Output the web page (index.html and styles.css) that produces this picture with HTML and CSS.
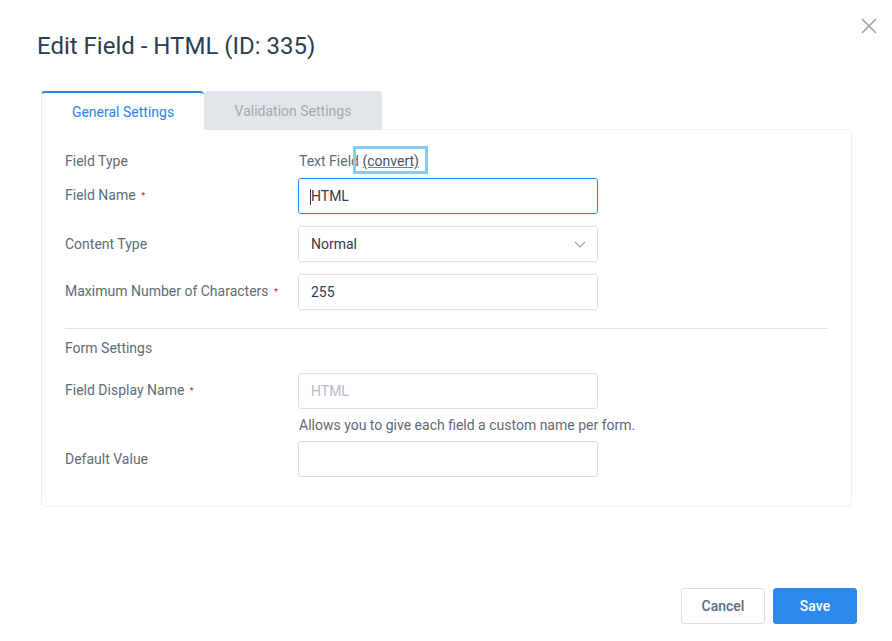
FILE: index.html
```html
<!DOCTYPE html>
<html lang="en">
<head>
    <meta charset="UTF-8">
    <meta name="viewport" content="width=device-width, initial-scale=1.0">
    <title>Edit Field</title>
    <link rel="stylesheet" href="styles.css">
</head>
<body>

    <div class="modal">
        <button class="cerrar" aria-label="Close">
            <svg width="18" height="18" viewBox="0 0 18 18">
                <path d="M2 2 L16 16 M16 2 L2 16" stroke="#9aa2ab" stroke-width="1.6" fill="none"/>
            </svg>
        </button>

        <h1 class="titulo">Edit Field - HTML (ID: 335)</h1>

        <!-- Pestañas -->
        <div class="tabs">
            <div class="tab activa">General Settings</div>
            <div class="tab">Validation Settings</div>
        </div>

        <div class="panel">
            <div class="fila fila-texto">
                <label>Field Type</label>
                <div class="valor">Text Field <a href="#" class="convertir">(convert)</a></div>
            </div>

            <div class="fila">
                <label>Field Name <span class="req">*</span></label>
                <div class="control">
                    <input type="text" class="campo foco" value="HTML">
                    <span class="caret"></span>
                </div>
            </div>

            <div class="fila">
                <label>Content Type</label>
                <div class="control">
                    <select class="campo">
                        <option>Normal</option>
                    </select>
                    <svg class="chevron" width="12" height="7" viewBox="0 0 12 7">
                        <path d="M1 1 L6 6 L11 1" stroke="#9aa2ab" stroke-width="1.2" fill="none"/>
                    </svg>
                </div>
            </div>

            <div class="fila">
                <label>Maximum Number of Characters <span class="req">*</span></label>
                <div class="control">
                    <input type="text" class="campo" value="255">
                </div>
            </div>

            <hr class="separador">

            <div class="fila fila-seccion">
                <label>Form Settings</label>
            </div>

            <div class="fila">
                <label>Field Display Name <span class="req">*</span></label>
                <div class="control">
                    <input type="text" class="campo" placeholder="HTML">
                </div>
            </div>

            <div class="fila fila-ayuda">
                <span></span>
                <div class="ayuda">Allows you to give each field a custom name per form.</div>
            </div>

            <div class="fila">
                <label>Default Value</label>
                <div class="control">
                    <input type="text" class="campo">
                </div>
            </div>
        </div>

        <div class="pie">
            <button class="boton">Cancel</button>
            <button class="boton primario">Save</button>
        </div>
    </div>

</body>
</html>
```

FILE: styles.css
```css
/* Estilos básicos */
body {
    font-family: Roboto, "Liberation Sans", Arial, sans-serif;
    margin: 0;
    padding: 0;
    background-color: white;
    color: #5f6b77;
    font-size: 14px;
}

.modal {
    position: relative;
    width: 892px;
    height: 641px;
    box-sizing: border-box;
    padding: 30px 35px 0 41px;
}

.cerrar {
    position: absolute;
    top: 17px;
    right: 14px;
    background: none;
    border: 0;
    padding: 0;
    cursor: pointer;
}

.titulo {
    margin: 0 0 29px -4px;
    font-size: 24px;
    font-weight: 400;
    line-height: 32px;
    color: #2c3e50;
}

/* Pestañas */
.tabs {
    display: flex;
    position: relative;
    z-index: 1;
}

.tab {
    height: 39px;
    box-sizing: border-box;
    padding: 0 30px;
    display: flex;
    align-items: center;
    justify-content: center;
    white-space: nowrap;
    background-color: #e2e6e9;
    color: #a2aab2;
    border-radius: 4px 4px 0 0;
    cursor: pointer;
}

.tab.activa {
    width: 163px;
    background-color: white;
    color: #2b86e6;
    border-top: 2px solid #2b86e6;
    border-left: 1px solid #eceef0;
    padding-top: 1px;
}

.tab:not(.activa) {
    width: 178px;
}

.panel {
    width: 811px;
    box-sizing: border-box;
    border: 1px solid #eceef0;
    border-radius: 0 6px 6px 6px;
    padding: 21px 23px 29px 23px;
    margin-top: -1px;
}

/* Filas del formulario */
.fila {
    display: grid;
    grid-template-columns: 233px 300px;
    align-items: center;
    margin-bottom: 12px;
}

.fila:last-child {
    margin-bottom: 0;
}

.fila label {
    line-height: 20px;
}

.fila-texto {
    height: 20px;
    margin-bottom: 7px;
}

.fila-seccion {
    height: 20px;
    margin-bottom: 15px;
}

.fila-ayuda {
    height: 20px;
    margin-top: -6px;
    margin-bottom: 6px;
}

.valor {
    padding-left: 1px;
    line-height: 20px;
    color: #5f6b77;
}

.convertir {
    color: #4a5662;
    text-decoration: underline;
    text-decoration-color: #7a8590;
    display: inline-block;
    line-height: 18px;
    padding: 4px 7px 2px 7px;
    margin: -4px -7px -2px -7px;
    outline: 3px solid #85cdf7;
    outline-offset: -1px;
}

.req {
    color: #b3261e;
    font-size: 9px;
    position: relative;
    top: -1px;
    margin-left: 2px;
}

.control {
    position: relative;
}

.campo {
    display: block;
    width: 300px;
    height: 36px;
    box-sizing: border-box;
    border: 1px solid #dcdfe3;
    border-radius: 3px;
    padding: 0 12px;
    font-family: inherit;
    font-size: 14px;
    color: #2c3e50;
    background-color: white;
    outline: none;
}

.campo::placeholder {
    color: #b5bcc4;
}

.campo.foco {
    border-color: #2b86e6;
}

.caret {
    position: absolute;
    left: 12px;
    top: 11px;
    width: 1px;
    height: 16px;
    background-color: #2c3e50;
}

select.campo {
    appearance: none;
    -webkit-appearance: none;
}

.chevron {
    position: absolute;
    right: 12px;
    top: 15px;
    pointer-events: none;
}

.separador {
    border: 0;
    border-top: 1px solid #e0e3e6;
    margin: 18px 0 9px 0;
}

.ayuda {
    padding-left: 1px;
    white-space: nowrap;
}

/* Botones */
.pie {
    display: flex;
    justify-content: flex-end;
    gap: 8px;
    margin-top: 81px;
}

.boton {
    width: 84px;
    height: 36px;
    border: 1px solid #dcdfe3;
    border-radius: 3px;
    background-color: white;
    color: #5f6b77;
    font-family: inherit;
    font-size: 14px;
    font-weight: 500;
    cursor: pointer;
}

.boton.primario {
    background-color: #2b89ea;
    border-color: #2b89ea;
    color: white;
}
```
